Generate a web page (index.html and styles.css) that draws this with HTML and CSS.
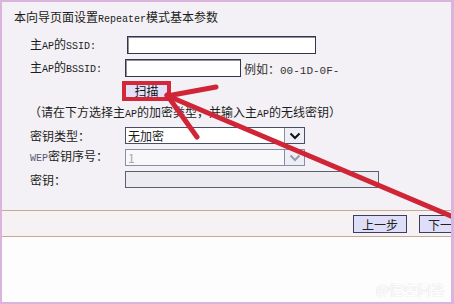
FILE: index.html
```html
<!DOCTYPE html>
<html lang="zh-CN">
<head>
  <meta charset="UTF-8">
  <title>Repeater模式基本参数</title>
  <link rel="stylesheet" href="styles.css">
</head>
<body>
  <div class="frame">
    <div class="main">
      <div class="title">本向导页面设置<span class="en">Repeater</span>模式基本参数</div>

      <div class="row row-ssid">
        <label class="label">主<span class="en">AP</span>的<span class="en">SSID:</span></label>
        <input type="text" class="text ssid">
      </div>
      <div class="row row-bssid">
        <label class="label">主<span class="en">AP</span>的<span class="en">BSSID:</span></label>
        <input type="text" class="text bssid">
        <span class="hint-eg">例如：<span class="en">00-1D-0F-</span></span>
      </div>
      <div class="row row-scan">
        <span class="mark"><button type="button" class="scan">扫描</button></span>
      </div>

      <div class="note">（请在下方选择主<span class="en">AP</span>的加密类型，并输入主<span class="en">AP</span>的无线密钥）</div>

      <div class="row row-sel">
        <label class="label">密钥类型：</label>
        <div class="select">
          <span class="value">无加密</span>
          <span class="drop">
            <svg width="12" height="8" viewBox="0 0 12 8"><path d="M1.5 1.5 L6 6 L10.5 1.5" fill="none" stroke="#111" stroke-width="2"/></svg>
          </span>
        </div>
      </div>
      <div class="row row-sel">
        <label class="label"><span class="en wep">WEP</span>密钥序号：</label>
        <div class="select disabled">
          <span class="value">1</span>
          <span class="drop">
            <svg width="12" height="8" viewBox="0 0 12 8"><path d="M1.5 1.5 L6 6 L10.5 1.5" fill="none" stroke="#9a9aa8" stroke-width="2"/></svg>
          </span>
        </div>
      </div>
      <div class="row row-sel">
        <label class="label">密钥：</label>
        <input type="text" class="text key" disabled>
      </div>
    </div>

    <div class="bar">
      <button type="button" class="step">上一步</button>
      <button type="button" class="step">下一步</button>
    </div>

    <div class="bottom">
      <span class="watermark">@悟空问答</span>
    </div>

    <!-- annotation arrow drawn over the screenshot -->
    <svg class="arrow" width="454" height="304" viewBox="0 0 454 304">
      <g fill="none" stroke="#d02536" stroke-width="5" stroke-linecap="round">
        <path d="M168 96 L458 219"/>
        <path d="M167 95 L197 137"/>
        <path d="M167 96 L216 87"/>
      </g>
    </svg>
  </div>
</body>
</html>
```

FILE: styles.css
```css
body {
  margin: 0;
  font-family: "Noto Sans CJK SC", sans-serif;
  font-size: 12px;
  color: #1c1c1c;
}
.frame {
  position: relative;
  width: 454px;
  height: 304px;
  box-sizing: border-box;
  border-style: solid;
  border-color: #dab4dc;
  border-width: 2px 3px 2px 2px;
  display: flex;
  flex-direction: column;
  overflow: hidden;
}
.en {
  font-family: "Liberation Mono", monospace;
  font-size: 10px;
}
.main {
  background: #f3f1f5;
  height: 208px;
  padding: 7px 0 0 12px;
  box-sizing: border-box;
}
.title {
  height: 16px;
  line-height: 16px;
  font-size: 12px;
}
.row {
  display: flex;
  align-items: center;
  padding-left: 16px;
}
.row-ssid {
  margin-top: 11px;
  height: 18px;
}
.row-bssid {
  margin-top: 5px;
  height: 18px;
}
.row-scan {
  margin-top: 4px;
  height: 20px;
}
.label {
  width: 95px;
  flex: none;
  line-height: 16px;
}
.text {
  box-sizing: border-box;
  height: 18px;
  margin: 0;
  padding: 0 2px;
  background: #fff;
  border: 1px solid #34344a;
  box-shadow: inset 1px 1px 0 #9090a0;
}
.ssid {
  width: 189px;
  margin-left: 2px;
}
.bssid {
  width: 116px;
}
.hint-eg {
  margin-left: 3px;
  color: #333;
}
.hint-eg .en {
  font-size: 11px;
}
.mark {
  margin-left: 92px;
  display: flex;
  border: 4px solid #d2283a;
  box-sizing: border-box;
  width: 49px;
  height: 20px;
}
.scan {
  flex: 1;
  margin: 0;
  padding: 0;
  border: none;
  background: #e4e0f8;
  font-family: "Noto Sans CJK SC", sans-serif;
  font-size: 12px;
  line-height: 12px;
  color: #111;
}
.note {
  margin-top: 3px;
  margin-left: 15px;
  height: 16px;
  line-height: 16px;
}
.row-sel {
  height: 17px;
  margin-top: 5px;
}
.note + .row-sel {
  margin-top: 7px;
}
.wep {
  color: #555a70;
}
.select {
  display: flex;
  width: 180px;
  height: 17px;
  box-sizing: border-box;
  border: 1px solid #4a4e62;
  background: #fff;
}
.select .value {
  flex: 1;
  padding-left: 2px;
  line-height: 15px;
}
.select .drop {
  width: 19px;
  border-left: 1px solid #8a8ca0;
  background: #eeeef6;
  display: flex;
  align-items: center;
  justify-content: center;
}
.select.disabled {
  border-color: #8a8ea4;
  background: #f8f8fa;
}
.select.disabled .value {
  color: #a8a8b0;
}
.key {
  width: 254px;
  height: 17px;
  background: #ececf0;
  border-color: #5c5e72;
  box-shadow: none;
}
.bar {
  height: 27px;
  box-sizing: border-box;
  border-top: 1px solid #c6a98e;
  border-bottom: 1px solid #c6a98e;
  background: #f6f1f2;
  display: flex;
  align-items: center;
  gap: 12px;
  padding-left: 351px;
  overflow: hidden;
}
.step {
  flex: none;
  width: 54px;
  height: 18px;
  margin: 0;
  padding: 0;
  border: 1px solid #3e3e5c;
  background: #dedef8;
  font-family: "Noto Sans CJK SC", sans-serif;
  font-size: 12px;
  color: #222;
}
.bottom {
  flex: 1;
  background: #fefdfd;
  position: relative;
}
.watermark {
  position: absolute;
  right: 6px;
  bottom: 3px;
  font-size: 14px;
  color: #fff;
  text-shadow: 0 0 1px #c8c8cc;
}
.arrow {
  position: absolute;
  left: -2px;
  top: -2px;
  pointer-events: none;
}
```
